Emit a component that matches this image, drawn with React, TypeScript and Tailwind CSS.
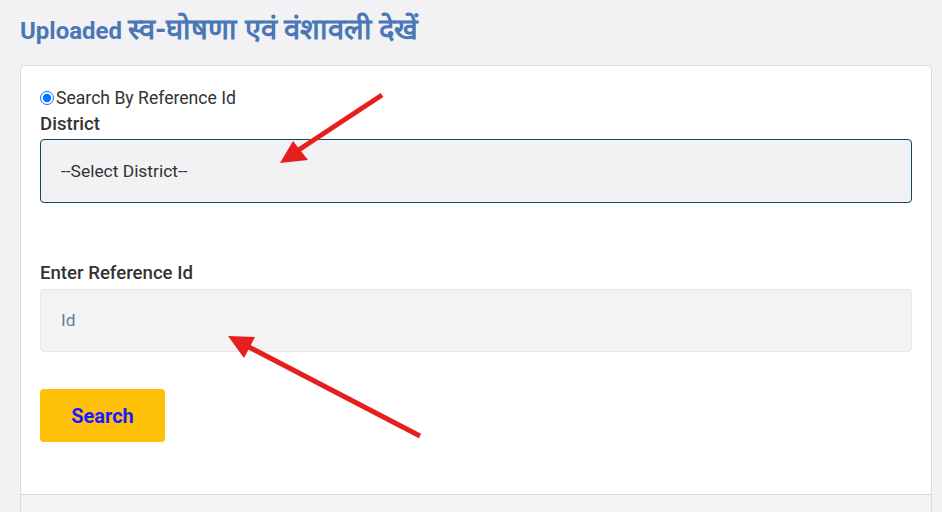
export default function App() {
  return (
    <div className="min-h-[512px] bg-[#f2f2f5] pl-5 pr-[10px] pt-[13px] font-['Roboto',sans-serif] text-[#333]">
      <h1 className="text-[24px] leading-[32px] font-bold text-[#4a77b5]">
        Uploaded <span className="text-[29px] leading-[32px]">स्व-घोषणा एवं वंशावली देखें</span>
      </h1>

      <div className="relative mt-[18px] rounded-[4px] border border-[#dddddd] bg-white">
        <div className="px-[19px] pt-5 pb-[52px]">
          <label className="flex items-center text-[17.6px] leading-[24px]">
            <input type="radio" defaultChecked className="m-0 mr-[2px] h-[14px] w-[14px] accent-[#0075ff]" />
            <span>Search By Reference Id</span>
          </label>

          <div className="mt-[1px] text-[18.6px] leading-[26px] font-medium">District</div>
          <div className="mt-[2px] flex h-[64px] items-center rounded-[4px] border border-[#0e4b5c] bg-[#f2f2f5] px-5 text-[17.4px]">
            --Select District--
          </div>

          <div className="mt-[57px] text-[18.6px] leading-[26px] font-medium">Enter Reference Id</div>
          <div className="mt-[3px] flex h-[63px] items-center rounded-[4px] border border-[#e6e6ea] bg-[#f3f3f5] px-5 text-[17.4px] text-[#6c7a96]">
            Id
          </div>

          <button className="mt-[37px] h-[53px] w-[125px] rounded-[4px] bg-[#ffc107] text-[20px] font-bold text-[#1a1aff]">
            Search
          </button>
        </div>
        <div className="h-[30px] border-t border-[#d9d9d9] bg-[#f5f5f6]" />

        <svg className="pointer-events-none absolute -left-5 -top-[65px]" width="942" height="512">
          <line x1="381" y1="94" x2="296" y2="150" stroke="#e61e1e" strokeWidth="5" />
          <polygon points="279,162 292,140 307,159" fill="#e61e1e" />
          <line x1="419" y1="435" x2="244" y2="344" stroke="#e61e1e" strokeWidth="5" />
          <polygon points="227,335 254,336 243,357" fill="#e61e1e" />
        </svg>
      </div>
    </div>
  )
}
